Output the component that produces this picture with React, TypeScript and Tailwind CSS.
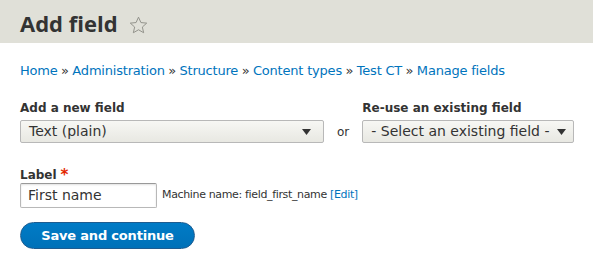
import React from "react";

const font = { fontFamily: '"DejaVu Sans", "Liberation Sans", sans-serif' };

function Star() {
  return (
    <svg width="19" height="18" viewBox="0 0 24 23" className="ml-[11px] mt-[6px]">
      <path
        d="M12 1.5l3.1 6.9 7.4.7-5.6 5 1.7 7.3L12 17.6l-6.6 3.8 1.7-7.3-5.6-5 7.4-.7z"
        fill="none"
        stroke="#8e8e86"
        strokeWidth="1.2"
      />
    </svg>
  );
}

function Caret() {
  return (
    <svg width="9" height="6" viewBox="0 0 9 6" className="shrink-0">
      <path d="M0 0h9L4.5 6z" fill="#333" />
    </svg>
  );
}

function Select({ value, className }: { value: string; className: string }) {
  return (
    <div
      className={`flex h-[23px] items-center justify-between rounded-[2px] border border-[#b8b8b8] bg-gradient-to-b from-[#f7f7f4] to-[#e8e8e2] pl-[8px] text-[14px] text-[#333] ${className}`}
    >
      <span className="whitespace-nowrap">{value}</span>
      <Caret />
    </div>
  );
}

export default function App() {
  const crumbs = ["Home", "Administration", "Structure", "Content types", "Test CT", "Manage fields"];
  return (
    <div className="h-[268px] w-[593px] overflow-hidden bg-white text-[#333]" style={font}>
      <div className="flex h-[43px] items-start bg-[#e0e0d8] pl-[20px] pt-[10px]">
        <h1
          className="text-[22px] leading-[26px] font-bold text-[#333]"
          style={{ fontFamily: '"Open Sans", "DejaVu Sans", sans-serif' }}
        >
          Add field
        </h1>
        <Star />
      </div>

      <nav className="mt-[20px] flex pl-[20px] text-[13px] leading-[16px] tracking-[-0.2px] text-[#0074bd]">
        {crumbs.map((c, i) => (
          <span key={c} className="flex">
            {i > 0 && <span className="px-[3.5px] text-[#333]">»</span>}
            <span>{c}</span>
          </span>
        ))}
      </nav>

      <div className="mt-[22px] flex items-end pl-[20px]">
        <div className="flex flex-col">
          <label className="mb-[5px] text-[12px] leading-[14px] font-bold">Add a new field</label>
          <Select value="Text (plain)" className="w-[304px] pr-[12px]" />
        </div>
        <span className="mx-[13px] mb-[4px] text-[12px] leading-[14px]">or</span>
        <div className="flex flex-col">
          <label className="mb-[5px] text-[12px] leading-[14px] font-bold">Re-use an existing field</label>
          <Select value="- Select an existing field -" className="w-[212px] pr-[7px]" />
        </div>
      </div>

      <div className="mt-[25px] pl-[20px]">
        <label className="flex text-[12px] leading-[14px] font-bold">
          Label<span className="ml-[4px] text-[15px] leading-[14px] text-[#e32700]">*</span>
        </label>
        <div className="mt-[1px] flex items-center">
          <div className="flex h-[25px] w-[137px] items-center rounded-[2px] border border-[#b8b8b8] border-t-[#999] bg-white pl-[7px] text-[14px] text-[#333] shadow-[inset_0_1px_2px_rgba(0,0,0,0.12)]">
            First name
          </div>
          <span className="ml-[5px] text-[11px] tracking-[-0.35px]">
            Machine name: field_first_name <span className="text-[#0074bd]">[Edit]</span>
          </span>
        </div>
        <button className="mt-[14px] flex h-[27px] w-[175px] items-center justify-center rounded-full border border-[#1e5c90] bg-gradient-to-b from-[#007bc6] to-[#0071b8] text-[13px] font-bold tracking-[-0.2px] text-white">
          Save and continue
        </button>
      </div>
    </div>
  );
}
